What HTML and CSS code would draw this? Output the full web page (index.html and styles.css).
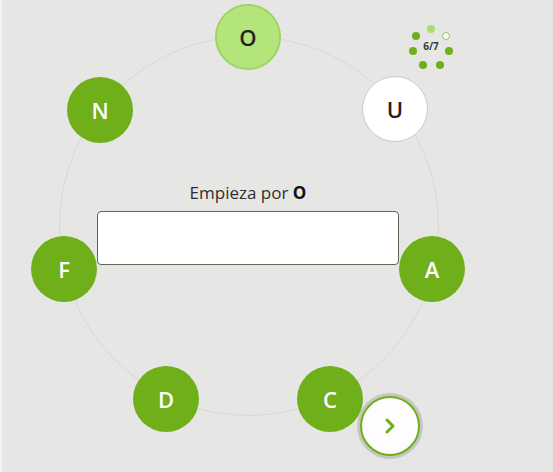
FILE: index.html
```html
<!DOCTYPE html>
<html lang="es">
<head>
    <meta charset="UTF-8">
    <meta name="viewport" content="width=device-width, initial-scale=1.0">
    <title>Rosco</title>
    <link rel="stylesheet" href="styles.css">
</head>
<body>
    <div class="board">
        <div class="ring"></div>

        <div class="letter current pos-o">O</div>
        <div class="letter pending pos-u">U</div>
        <div class="letter done pos-a">A</div>
        <div class="letter done pos-c">C</div>
        <div class="letter done pos-d">D</div>
        <div class="letter done pos-f">F</div>
        <div class="letter done pos-n">N</div>

        <div class="progress">
            <span class="dot current d1"></span>
            <span class="dot pending d2"></span>
            <span class="dot d3"></span>
            <span class="dot d4"></span>
            <span class="dot d5"></span>
            <span class="dot d6"></span>
            <span class="dot d7"></span>
            <span class="count">6/7</span>
        </div>

        <div class="prompt">
            <p class="hint">Empieza por <strong>O</strong></p>
            <input class="answer" type="text">
        </div>

        <button class="next" aria-label="Siguiente">
            <svg width="14" height="18" viewBox="0 0 14 18">
                <path d="M4 3 L10 9 L4 15" fill="none" stroke="#6eaf1a" stroke-width="3" stroke-linecap="round" stroke-linejoin="round"/>
            </svg>
        </button>
    </div>
</body>
</html>
```

FILE: styles.css
```css
body {
    margin: 0;
    background-color: #e6e6e5;
    border-left: 2px solid #f3f3f2;
    font-family: "Open Sans", Lato, sans-serif;
    color: #2b2b2b;
    overflow: hidden;
}
.board {
    position: relative;
    width: 551px;
    height: 472px;
}
.ring {
    position: absolute;
    left: 57px;
    top: 36px;
    width: 378px;
    height: 378px;
    border: 1px solid #d8d8d6;
    border-radius: 50%;
}
.letter {
    position: absolute;
    width: 66px;
    height: 66px;
    box-sizing: border-box;
    border-radius: 50%;
    display: flex;
    align-items: center;
    justify-content: center;
    font-size: 22px;
    font-weight: 600;
}
.letter.done {
    background-color: #6eaf1a;
    color: #fff;
}
.letter.current {
    background-color: #b4e57a;
    border: 2px solid #9fd363;
    color: #222;
}
.letter.pending {
    background-color: #fff;
    border: 1px solid #c9c9c5;
    color: #222;
}
.pos-o { left: 213px; top: 4px; }
.pos-u { left: 360px; top: 76px; }
.pos-a { left: 397px; top: 236px; }
.pos-c { left: 295px; top: 366px; }
.pos-d { left: 131px; top: 366px; }
.pos-f { left: 29px; top: 236px; }
.pos-n { left: 65px; top: 77px; }

.progress {
    position: absolute;
    left: 406px;
    top: 23px;
    width: 46px;
    height: 46px;
}
.dot {
    position: absolute;
    width: 8px;
    height: 8px;
    box-sizing: border-box;
    border-radius: 50%;
    background-color: #6eaf1a;
}
.dot.current {
    background-color: #a9de6c;
}
.dot.pending {
    background-color: #fff;
    border: 1.5px solid #8cc84a;
}
.d1 { left: 19px; top: 2px; }
.d2 { left: 34px; top: 9px; }
.d3 { left: 37px; top: 24px; }
.d4 { left: 28px; top: 38px; }
.d5 { left: 11px; top: 38px; }
.d6 { left: 1px; top: 24px; }
.d7 { left: 4px; top: 9px; }
.count {
    position: absolute;
    left: 0;
    right: 0;
    top: 16px;
    text-align: center;
    font-size: 10px;
    font-weight: 700;
    color: #3a3a3a;
}

.prompt {
    position: absolute;
    left: 95px;
    top: 181px;
    width: 302px;
    display: flex;
    flex-direction: column;
    align-items: center;
}
.hint {
    margin: 0 0 7px;
    font-size: 17px;
    line-height: 23px;
    color: #2f2f2f;
}
.hint strong {
    color: #111;
}
.answer {
    width: 302px;
    height: 54px;
    box-sizing: border-box;
    margin: 0;
    border: 1px solid #5c6652;
    border-radius: 4px;
    background-color: #fff;
    outline: none;
}

.next {
    position: absolute;
    left: 358px;
    top: 396px;
    width: 60px;
    height: 60px;
    padding: 0;
    border-radius: 50%;
    border: 2px solid #6eaf1a;
    background-color: #fdfdfd;
    box-shadow: 0 0 0 3px #c6c6c3;
    display: flex;
    align-items: center;
    justify-content: center;
    cursor: pointer;
}
```
